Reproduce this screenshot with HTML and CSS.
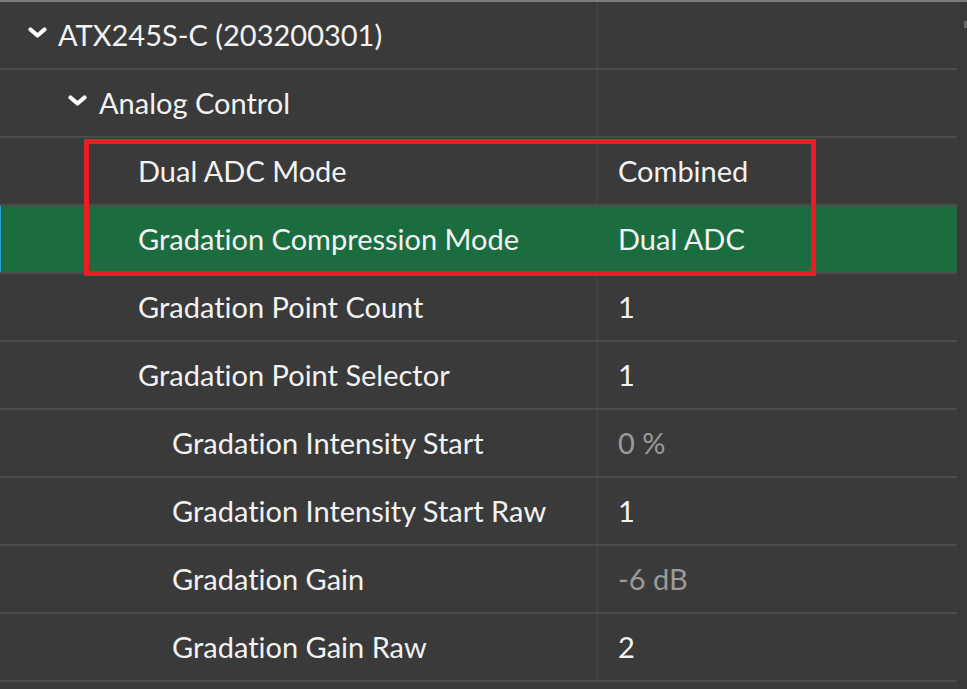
FILE: index.html
```html
<!DOCTYPE html>
<html>
<head>
<meta charset="utf-8">
<link rel="stylesheet" href="styles.css">
</head>
<body>
<div class="panel">
  <div class="grid">
    <div class="row">
      <div class="name lvl0"><svg class="chev" viewBox="0 0 19 11" width="19" height="11"><polyline points="2.5,2.5 9.5,8.5 16.5,2.5"/></svg><span>ATX245S-C (203200301)</span></div>
      <div class="value"></div>
    </div>
    <div class="row">
      <div class="name lvl1"><svg class="chev" viewBox="0 0 19 11" width="19" height="11"><polyline points="2.5,2.5 9.5,8.5 16.5,2.5"/></svg><span>Analog Control</span></div>
      <div class="value"></div>
    </div>
    <div class="row">
      <div class="name lvl2">Dual ADC Mode</div>
      <div class="value">Combined</div>
    </div>
    <div class="row selected">
      <div class="name lvl2">Gradation Compression Mode</div>
      <div class="value">Dual ADC</div>
    </div>
    <div class="row">
      <div class="name lvl2">Gradation Point Count</div>
      <div class="value">1</div>
    </div>
    <div class="row">
      <div class="name lvl2">Gradation Point Selector</div>
      <div class="value">1</div>
    </div>
    <div class="row">
      <div class="name lvl3">Gradation Intensity Start</div>
      <div class="value readonly">0 %</div>
    </div>
    <div class="row">
      <div class="name lvl3">Gradation Intensity Start Raw</div>
      <div class="value">1</div>
    </div>
    <div class="row">
      <div class="name lvl3">Gradation Gain</div>
      <div class="value readonly">-6 dB</div>
    </div>
    <div class="row">
      <div class="name lvl3">Gradation Gain Raw</div>
      <div class="value">2</div>
    </div>
    <div class="highlight"></div>
  </div>
  <div class="scroll"><span class="arrow"></span></div>
</div>
</body>
</html>
```

FILE: styles.css
```css
html, body {
  margin: 0;
  padding: 0;
  background: #3a3a3a;
}
body {
  font-family: Lato, "Open Sans", sans-serif;
  font-size: 29px;
  font-variant-ligatures: none;
  font-feature-settings: "liga" 0;
  color: #f2f2f2;
  overflow: hidden;
}
.panel {
  display: flex;
  border-top: 2px solid #7b7b7b;
  height: 687px;
}
.grid {
  position: relative;
  width: 957px;
  display: flex;
  flex-direction: column;
}
.row {
  display: grid;
  grid-template-columns: 596px 359px;
  height: 66px;
  border-bottom: 2px solid #4b4b4b;
  flex: none;
}
.name {
  display: flex;
  align-items: center;
  white-space: nowrap;
  padding-bottom: 2px;
}
.value {
  display: flex;
  align-items: center;
  border-left: 2px solid #414141;
  padding-left: 20px;
  padding-bottom: 2px;
  white-space: nowrap;
}
.readonly {
  color: #9b9b9b;
}
.lvl0 { padding-left: 28px; gap: 11px; }
.lvl1 { padding-left: 68px; gap: 12px; }
.lvl2 { padding-left: 138px; }
.lvl3 { padding-left: 172px; }
.chev {
  margin-top: -3px;
  flex: none;
}
.chev polyline {
  fill: none;
  stroke: #ffffff;
  stroke-width: 4.2;
  stroke-linecap: round;
  stroke-linejoin: round;
}
.selected {
  background: #1b6d40;
  box-shadow: inset 1px 0 0 #22a3d6;
}
.selected .value {
  border-left-color: #1b6d40;
}
.highlight {
  position: absolute;
  left: 84px;
  top: 137px;
  width: 722px;
  height: 127px;
  border: 5px solid #ec1c24;
}
.scroll {
  flex: 1;
  position: relative;
  background: #393939;
}
.arrow {
  position: absolute;
  right: 0;
  top: 19px;
  width: 3px;
  height: 7px;
  background: #6a6a6a;
}
```
